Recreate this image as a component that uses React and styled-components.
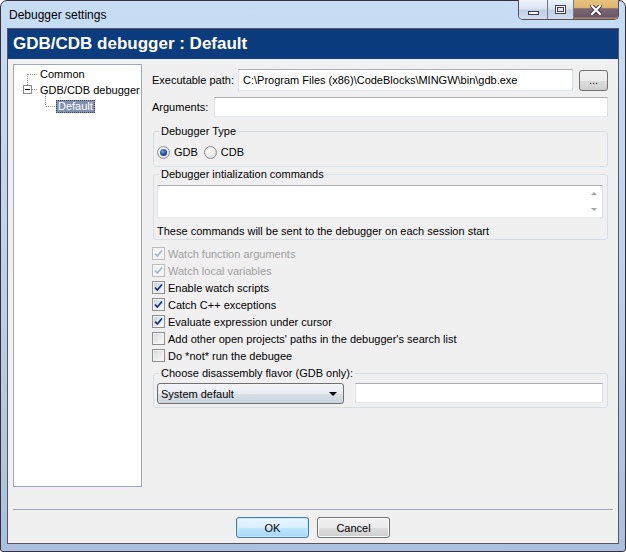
import React from "react";
import styled, { createGlobalStyle } from "styled-components";

const GlobalStyle = createGlobalStyle`
  html, body {
    margin: 0;
    padding: 0;
    background: #ffffff;
  }
  body {
    font-family: "Liberation Sans", Arial, sans-serif;
    font-size: 11px;
    color: #000000;
  }
  * {
    box-sizing: border-box;
  }
`;

const Window = styled.div`
  width: 626px;
  height: 552px;
  display: flex;
  flex-direction: column;
  padding: 0 6px 7px;
  border: 1px solid #3b2e3a;
  border-radius: 7px 7px 3px 3px;
  background: linear-gradient(180deg, #c7ddf3 0%, #bdd4ec 45%, #a9c1dc 100%);
`;

const TitleBar = styled.div`
  height: 27px;
  display: flex;
  align-items: flex-start;
  justify-content: space-between;
  padding-left: 2px;
`;

const TitleText = styled.div`
  font-size: 12px;
  line-height: 27px;
  padding-top: 1px;
`;

const CaptionGroup = styled.div`
  display: flex;
  height: 20px;
  margin-top: -1px;
  border: 1px solid #5b4c5c;
  border-top: none;
  border-radius: 0 0 5px 5px;
  overflow: hidden;
`;

const CaptionButton = styled.div`
  width: ${(p) => p.$w}px;
  display: flex;
  align-items: center;
  justify-content: center;
  background: ${(p) =>
    p.$close
      ? "linear-gradient(180deg, #e6c47e 0%, #ddb76c 40%, #7d6673 46%, #6c5868 88%, #b8976a 100%)"
      : "linear-gradient(180deg, #eef3fa 0%, #d9e4f1 45%, #bfd0e4 55%, #d2deec 100%)"};
  & + & {
    border-left: 1px solid #7d7288;
  }
`;

const MinGlyph = styled.span`
  width: 11px;
  height: 4px;
  margin-top: 7px;
  background: #ffffff;
  border: 1px solid #3c3a5a;
`;

const MaxGlyph = styled.span`
  width: 11px;
  height: 9px;
  border: 1px solid #3c3a5a;
  box-shadow: inset 0 0 0 1px #ffffff, inset 0 0 0 2px #3c3a5a;
  background: #dfe7f2;
`;

const Client = styled.div`
  flex: 1;
  display: flex;
  flex-direction: column;
  background: #f0f0f0;
  border: 1px solid #5e5262;
`;

const Header = styled.div`
  height: 30px;
  display: flex;
  align-items: center;
  padding-left: 5px;
  background: #0b3c7d;
  color: #ffffff;
  font-size: 17px;
  font-weight: bold;
`;

const Body = styled.div`
  display: flex;
  gap: 10px;
  padding: 5px 10px 0 5px;
`;

const Tree = styled.div`
  width: 129px;
  height: 423px;
  flex: none;
  padding-top: 1px;
  background: #ffffff;
  border: 1px solid #9ea9bb;
`;

const TreeRow = styled.div`
  height: 16px;
  display: flex;
  align-items: center;
  white-space: nowrap;
`;

const TreeLines = styled.svg`
  flex: none;
  overflow: visible;
`;

const TreeLabel = styled.span`
  flex: none;
  white-space: nowrap;
  line-height: 13px;
  padding: 0 2px 0 ${(p) => (p.$selected ? 2 : 1)}px;
  background: ${(p) => (p.$selected ? "#8090ad" : "transparent")};
  color: ${(p) => (p.$selected ? "#ffffff" : "#000000")};
  outline: ${(p) => (p.$selected ? "1px dotted #3a4560" : "none")};
  outline-offset: -1px;
`;

const Form = styled.div`
  width: 456px;
  flex: none;
  display: flex;
  flex-direction: column;
`;

const FieldRow = styled.div`
  display: flex;
  align-items: center;
  margin-top: ${(p) => p.$top}px;
`;

const FieldLabel = styled.span`
  width: ${(p) => p.$w}px;
  flex: none;
  white-space: nowrap;
`;

const TextInput = styled.input`
  flex: 1;
  min-width: 0;
  height: ${(p) => p.$h}px;
  margin: 0 0 0 ${(p) => p.$left || 0}px;
  padding: 0 4px;
  font: inherit;
  color: #000000;
  background: #ffffff;
  border: 1px solid;
  border-color: #abadb3 #dbdfe6 #e3e9ef #e2e3ea;
  outline: none;
`;

const SmallButton = styled.div`
  width: 29px;
  height: 21px;
  margin-left: 6px;
  flex: none;
  display: flex;
  align-items: flex-end;
  justify-content: center;
  padding-bottom: 4px;
  line-height: 11px;
  border: 1px solid #707070;
  border-radius: 3px;
  background: linear-gradient(180deg, #f2f2f2 0%, #ebebeb 50%, #dddddd 51%, #cfcfcf 100%);
  align-self: flex-start;
  margin-top: 1px;
`;

const Group = styled.div`
  margin: ${(p) => p.$top}px 0 0 1px;
  padding-bottom: ${(p) => p.$bottom}px;
  border: 1px solid #d5dfe5;
  border-radius: 3px;
`;

const Legend = styled.div`
  width: fit-content;
  margin: -8px 0 0 5px;
  padding: 0 2px;
  line-height: 14px;
  background: #f0f0f0;
`;

const RadioRow = styled.div`
  height: 16px;
  margin-top: 6px;
  padding-left: 3px;
  display: flex;
  align-items: center;
`;

const RadioItem = styled.label`
  display: flex;
  align-items: center;
  gap: 4px;
  margin-right: 6px;
`;

const RadioCircle = styled.span`
  width: 13px;
  height: 13px;
  border-radius: 50%;
  border: 1px solid #8e8f8f;
  background: radial-gradient(circle at 40% 40%, #ffffff 0%, #e6e6e6 60%, #cfd3d8 100%);
  display: flex;
  align-items: center;
  justify-content: center;
  &::after {
    content: "";
    display: ${(p) => (p.$on ? "block" : "none")};
    width: 7px;
    height: 7px;
    border-radius: 50%;
    background: radial-gradient(circle at 40% 35%, #6aa4e0 0%, #1d4f91 55%, #173a6c 100%);
  }
`;

const CommandArea = styled.div`
  height: 33px;
  margin: 4px 4px 0 3px;
  display: flex;
  justify-content: flex-end;
  background: #ffffff;
  border: 1px solid;
  border-color: #abadb3 #dbdfe6 #e3e9ef #e2e3ea;
`;

const ScrollStrip = styled.div`
  width: 17px;
  display: flex;
  flex-direction: column;
  justify-content: space-between;
  align-items: center;
  padding: 6px 0 6px;
`;

const Arrow = styled.span`
  width: 0;
  height: 0;
  border-left: 3px solid transparent;
  border-right: 3px solid transparent;
  ${(p) => (p.$up ? "border-bottom" : "border-top")}: 3px solid #a3a3a3;
`;

const Note = styled.div`
  margin-top: 6px;
  padding-left: 3px;
  line-height: 14px;
`;

const CheckList = styled.div`
  margin-top: 5px;
  display: flex;
  flex-direction: column;
`;

const CheckRow = styled.label`
  height: 17px;
  display: flex;
  align-items: center;
  gap: 3px;
  white-space: nowrap;
  color: ${(p) => (p.$disabled ? "#a0a0a0" : "#000000")};
`;

const CheckBox = styled.span`
  width: 13px;
  height: 13px;
  flex: none;
  display: flex;
  align-items: center;
  justify-content: center;
  border: 1px solid ${(p) => (p.$disabled ? "#bcbcbc" : "#8e8f8f")};
  background: ${(p) =>
    p.$disabled
      ? "#f4f4f4"
      : p.$checked
      ? "linear-gradient(135deg, #c3d2e6 0%, #e3ecf7 60%, #f6f9fc 100%)"
      : "linear-gradient(135deg, #d3d6da 0%, #eeeeee 60%, #fafafa 100%)"};
  box-shadow: inset 0 0 0 1px ${(p) => (p.$disabled ? "#f8f8f8" : "#f4f4f4")};
`;

const ControlRow = styled.div`
  display: flex;
  align-items: flex-start;
  margin-top: 3px;
  padding: 0 4px 0 3px;
`;

const Select = styled.div`
  width: 187px;
  height: 21px;
  flex: none;
  display: flex;
  align-items: center;
  justify-content: space-between;
  padding: 0 6px 0 3px;
  border: 1px solid #707070;
  border-radius: 3px;
  background: linear-gradient(180deg, #f3f5f8 0%, #e9edf2 50%, #d9e0e8 51%, #ccd5df 100%);
`;

const SelectArrow = styled.span`
  width: 0;
  height: 0;
  border-left: 4px solid transparent;
  border-right: 4px solid transparent;
  border-top: 4px solid #000000;
`;

const Footer = styled.div`
  margin: 22px 5px 0;
  padding-top: 7px;
  border-top: 1px solid #a0aab9;
  display: flex;
  justify-content: center;
  gap: 8px;
`;

const DialogButton = styled.div`
  width: 73px;
  height: 21px;
  display: flex;
  align-items: center;
  justify-content: center;
  border: 1px solid ${(p) => (p.$default ? "#3c7fb1" : "#707070")};
  border-radius: 3px;
  background: ${(p) =>
    p.$default
      ? "linear-gradient(180deg, #eaf6fd 0%, #d9f0fc 50%, #bee6fd 51%, #a7d9f5 100%)"
      : "linear-gradient(180deg, #f2f2f2 0%, #ebebeb 50%, #dddddd 51%, #cfcfcf 100%)"};
  box-shadow: inset 0 0 0 1px ${(p) => (p.$default ? "#c9e6f8" : "#fbfbfb")};
`;

const options = [
  { label: "Watch function arguments", checked: true, disabled: true },
  { label: "Watch local variables", checked: true, disabled: true },
  { label: "Enable watch scripts", checked: true },
  { label: "Catch C++ exceptions", checked: true },
  { label: "Evaluate expression under cursor", checked: true },
  { label: "Add other open projects' paths in the debugger's search list", checked: false },
  { label: "Do *not* run the debugee", checked: false },
];

const dots = { stroke: "#9a9a9a", strokeWidth: 1, strokeDasharray: "1 1" };

function CloseGlyph() {
  return (
    <svg width="12" height="10" viewBox="0 0 12 10">
      <path d="M2 1 L10 9 M10 1 L2 9" stroke="#3d3040" strokeWidth="4" strokeLinecap="square" />
      <path d="M2 1 L10 9 M10 1 L2 9" stroke="#ffffff" strokeWidth="2.2" strokeLinecap="square" />
    </svg>
  );
}

function Check({ disabled }) {
  return (
    <svg width="11" height="11" viewBox="0 0 11 11">
      <path
        d="M2 5.5 L4.3 8 L9 2.5"
        fill="none"
        stroke={disabled ? "#a8b4c4" : "#1d2f66"}
        strokeWidth="1.7"
      />
    </svg>
  );
}

function SettingsTree() {
  return (
    <Tree>
      <TreeRow>
        <TreeLines width="25" height="16">
          <line x1="13.5" y1="8" x2="13.5" y2="16" {...dots} />
          <line x1="14" y1="8.5" x2="24" y2="8.5" {...dots} />
        </TreeLines>
        <TreeLabel>Common</TreeLabel>
      </TreeRow>
      <TreeRow>
        <TreeLines width="25" height="16">
          <line x1="13.5" y1="0" x2="13.5" y2="3" {...dots} />
          <rect x="9.5" y="3.5" width="8" height="8" fill="#ffffff" stroke="#8c8c8c" />
          <line x1="11" y1="7.5" x2="16" y2="7.5" stroke="#000000" />
          <line x1="18" y1="7.5" x2="24" y2="7.5" {...dots} />
        </TreeLines>
        <TreeLabel>GDB/CDB debugger</TreeLabel>
      </TreeRow>
      <TreeRow>
        <TreeLines width="42" height="16">
          <line x1="31.5" y1="-4" x2="31.5" y2="8" {...dots} />
          <line x1="32" y1="8.5" x2="42" y2="8.5" {...dots} />
        </TreeLines>
        <TreeLabel $selected>Default</TreeLabel>
      </TreeRow>
    </Tree>
  );
}

function App() {
  return (
    <>
      <GlobalStyle />
      <Window>
        <TitleBar>
          <TitleText>Debugger settings</TitleText>
          <CaptionGroup>
            <CaptionButton $w={28}>
              <MinGlyph />
            </CaptionButton>
            <CaptionButton $w={26}>
              <MaxGlyph />
            </CaptionButton>
            <CaptionButton $w={45} $close>
              <CloseGlyph />
            </CaptionButton>
          </CaptionGroup>
        </TitleBar>
        <Client>
          <Header>GDB/CDB debugger : Default</Header>
          <Body>
            <SettingsTree />
            <Form>
              <FieldRow $top={5}>
                <FieldLabel $w={86}>Executable path:</FieldLabel>
                <TextInput $h={22} readOnly value="C:\Program Files (x86)\CodeBlocks\MINGW\bin\gdb.exe" />
                <SmallButton>...</SmallButton>
              </FieldRow>
              <FieldRow $top={6}>
                <FieldLabel $w={62}>Arguments:</FieldLabel>
                <TextInput $h={20} readOnly value="" />
              </FieldRow>

              <Group $top={14} $bottom={6}>
                <Legend>Debugger Type</Legend>
                <RadioRow>
                  <RadioItem>
                    <RadioCircle $on />
                    GDB
                  </RadioItem>
                  <RadioItem>
                    <RadioCircle />
                    CDB
                  </RadioItem>
                </RadioRow>
              </Group>

              <Group $top={7} $bottom={1}>
                <Legend>Debugger intialization commands</Legend>
                <CommandArea>
                  <ScrollStrip>
                    <Arrow $up />
                    <Arrow />
                  </ScrollStrip>
                </CommandArea>
                <Note>These commands will be sent to the debugger on each session start</Note>
              </Group>

              <CheckList>
                {options.map((o) => (
                  <CheckRow key={o.label} $disabled={o.disabled}>
                    <CheckBox $checked={o.checked} $disabled={o.disabled}>
                      {o.checked && <Check disabled={o.disabled} />}
                    </CheckBox>
                    {o.label}
                  </CheckRow>
                ))}
              </CheckList>

              <Group $top={9} $bottom={3}>
                <Legend>Choose disassembly flavor (GDB only):</Legend>
                <ControlRow>
                  <Select>
                    System default
                    <SelectArrow />
                  </Select>
                  <TextInput $h={20} $left={11} readOnly value="" />
                </ControlRow>
              </Group>
            </Form>
          </Body>
          <Footer>
            <DialogButton $default>OK</DialogButton>
            <DialogButton>Cancel</DialogButton>
          </Footer>
        </Client>
      </Window>
    </>
  );
}

export default App;
